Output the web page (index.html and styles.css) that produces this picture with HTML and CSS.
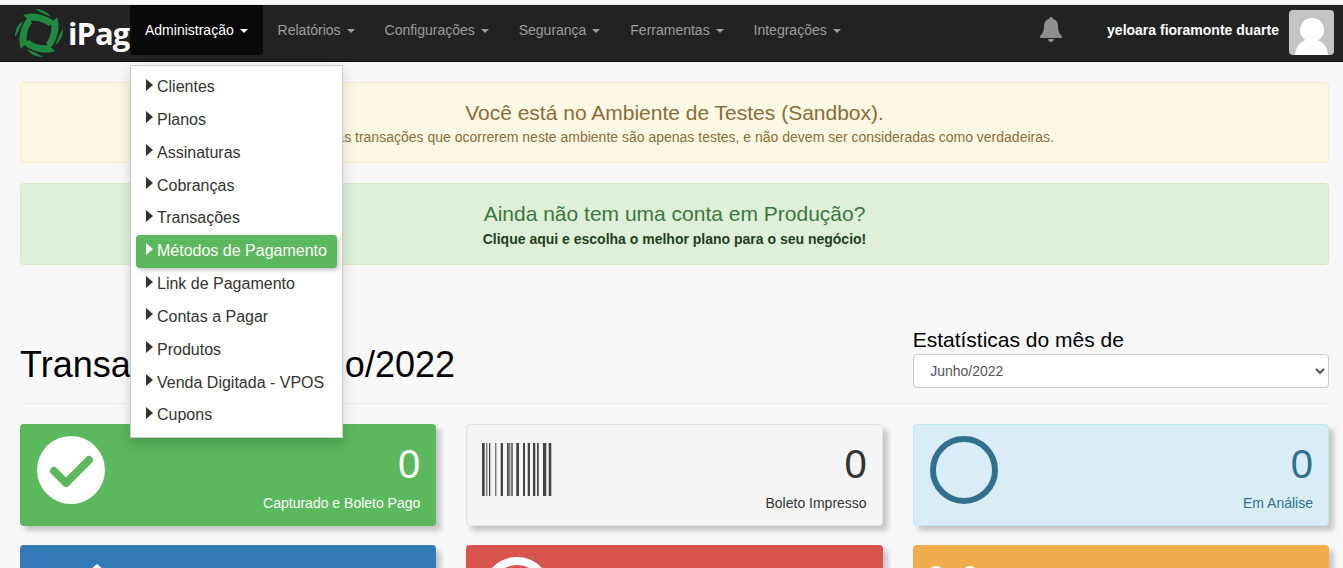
FILE: index.html
```html
<!DOCTYPE html>
<html lang="pt-BR">
<head>
<meta charset="utf-8">
<title>iPag</title>
<link rel="stylesheet" href="styles.css">
</head>
<body>
<header class="navbar">
  <a class="brand" href="#">
    <svg class="brand-mark" viewBox="-24 -25 48 50" aria-hidden="true">
      <g fill="#1f8a3f">
        <g id="blade"><path d="M-16,-18 C-6,-22 8,-18 16,-11 L10,-7 C4,-12 -4,-13 -9,-12 Z"/><path d="M-4,-24 C3,-24 9,-21 12,-16 C6,-19 0,-21 -4,-24 Z"/></g>
        <use href="#blade" transform="rotate(90)"/>
        <use href="#blade" transform="rotate(180)"/>
        <use href="#blade" transform="rotate(270)"/>
      </g>
    </svg>
    <span class="brand-name">iPag</span>
  </a>
  <nav class="nav">
    <a class="nav-item is-active" href="#">Administração <i class="caret"></i></a>
    <a class="nav-item" href="#">Relatórios <i class="caret"></i></a>
    <a class="nav-item" href="#">Configurações <i class="caret"></i></a>
    <a class="nav-item" href="#">Segurança <i class="caret"></i></a>
    <a class="nav-item" href="#">Ferramentas <i class="caret"></i></a>
    <a class="nav-item" href="#">Integrações <i class="caret"></i></a>
  </nav>
  <svg class="bell" viewBox="0 0 22 25" aria-hidden="true"><path d="M11 0c-1.1 0-1.8.8-1.7 1.8C5.8 2.6 4 5.3 4 9c0 5-1.2 7.400-3.300 9.300-.5.5-.7.9-.7 1.400 0 .7.500 1.300 1.300 1.300h19.400c.8 0 1.300-.6 1.300-1.300 0-.5-.2-.9-.7-1.400C19.200 16.400 18 14 18 9c0-3.700-1.800-6.400-5.300-7.200C12.800.8 12.100 0 11 0zM8 22c.2 1.700 1.500 3 3 3s2.800-1.300 3-3z"/></svg>
  <span class="user-name">yeloara fioramonte duarte</span>
  <svg class="avatar" viewBox="0 0 45 45" aria-hidden="true"><circle cx="23" cy="20" r="12"/><path d="M6 45C7 34 14 29 22.500 29S38 34 39 45z"/></svg>
</header>

<main class="page">
  <div class="alert alert-warning">
    <h4>Você está no Ambiente de Testes (Sandbox).</h4>
    <p>Todas as transações que ocorrerem neste ambiente são apenas testes, e não devem ser consideradas como verdadeiras.</p>
  </div>
  <div class="alert alert-success">
    <h4>Ainda não tem uma conta em Produção?</h4>
    <p><strong>Clique aqui e escolha o melhor plano para o seu negócio!</strong></p>
  </div>

  <section class="title-row">
    <h1>Transações de Junho/2022</h1>
    <div class="month-picker">
      <label for="mes">Estatísticas do mês de</label>
      <select id="mes"><option>Junho/2022</option></select>
    </div>
  </section>
  <hr class="rule">

  <section class="cards">
    <article class="card card-green">
      <svg class="card-icon" viewBox="0 0 68 68" aria-hidden="true"><circle class="ico-fill" cx="34" cy="34" r="34"/><path class="ico-check" d="M17 35L29 47L52 24"/></svg>
      <div class="card-body"><div class="card-num">0</div><div class="card-label">Capturado e Boleto Pago</div></div>
    </article>
    <article class="card card-gray">
      <svg class="barcode" viewBox="0 0 71 53" aria-hidden="true"><path d="M0 0h2.700v53H0zM4.300 0h1v53h-1zM7 0h1.300v53H7zM13.300 0h1v53h-1zM18.700 0h2.300v53h-2.300zM25 0h1.700v53H25zM27.300 0h1v53h-1zM29.300 0h1.400v53h-1.400zM34.300 0h2.700v53h-2.700zM41 0h2v53h-2zM45.700 0h2.300v53h-2.300zM51 0h2.300v53H51zM55 0h1.700v53H55zM61 0h3.300v53H61zM66.700 0h2.600v53h-2.600z"/></svg>
      <div class="card-body"><div class="card-num">0</div><div class="card-label">Boleto Impresso</div></div>
    </article>
    <article class="card card-info">
      <svg class="card-icon" viewBox="0 0 68 68" aria-hidden="true"><circle class="ico-ring" cx="34" cy="34" r="31"/></svg>
      <div class="card-body"><div class="card-num">0</div><div class="card-label">Em Análise</div></div>
    </article>
    <article class="card card-blue">
      <svg class="card-icon card-icon-low" viewBox="0 0 68 68" aria-hidden="true"><path class="ico-fill" d="M60 7l14 12v49H46V19z"/></svg>
      <div class="card-body"><div class="card-num">0</div><div class="card-label">Autorizado</div></div>
    </article>
    <article class="card card-red">
      <svg class="card-icon" viewBox="0 0 68 68" aria-hidden="true"><circle class="ico-ring-white" cx="34" cy="34" r="30"/></svg>
      <div class="card-body"><div class="card-num">0</div><div class="card-label">Cancelado</div></div>
    </article>
    <article class="card card-orange">
      <svg class="card-icon card-icon-low" viewBox="0 0 68 68" aria-hidden="true"><circle class="ico-fill" cx="6" cy="17" r="8"/><circle class="ico-fill" cx="40" cy="17" r="8"/></svg>
      <div class="card-body"><div class="card-num">0</div><div class="card-label">Pendente</div></div>
    </article>
  </section>
</main>

<ul class="dropdown">
  <li><a href="#"><i class="arrow"></i>Clientes</a></li>
  <li><a href="#"><i class="arrow"></i>Planos</a></li>
  <li><a href="#"><i class="arrow"></i>Assinaturas</a></li>
  <li><a href="#"><i class="arrow"></i>Cobranças</a></li>
  <li><a href="#"><i class="arrow"></i>Transações</a></li>
  <li><a class="is-active" href="#"><i class="arrow"></i>Métodos de Pagamento</a></li>
  <li><a href="#"><i class="arrow"></i>Link de Pagamento</a></li>
  <li><a href="#"><i class="arrow"></i>Contas a Pagar</a></li>
  <li><a href="#"><i class="arrow"></i>Produtos</a></li>
  <li><a href="#"><i class="arrow"></i>Venda Digitada - VPOS</a></li>
  <li><a href="#"><i class="arrow"></i>Cupons</a></li>
</ul>
</body>
</html>
```
FILE: styles.css
```css
* { box-sizing: border-box; }
html, body { height: 568px; overflow: hidden; }
body {
  margin: 0;
  padding-top: 4px;
  background: #f8f8f8;
  font: 14px/1.42857 "Liberation Sans", Arial, sans-serif;
  color: #333;
}
a { text-decoration: none; color: inherit; }

.navbar {
  display: flex;
  align-items: flex-start;
  height: 58px;
  background: #222;
  border-top: 1px solid #e7e7e7;
  border-bottom: 1px solid #080808;
}
.brand { display: flex; align-items: center; height: 56px; width: 130px; padding-left: 15px; flex: none; }
.brand-mark { width: 48px; height: 50px; flex: none; }
.brand-name { margin-left: 5px; font: 700 31px/1 "Open Sans", sans-serif; letter-spacing: -1px; color: #fff; }
.nav { display: flex; }
.nav-item { display: block; height: 50px; padding: 15px; line-height: 20px; color: #9d9d9d; white-space: nowrap; }
.nav-item.is-active { background: #080808; color: #fff; border-radius: 0 0 4px 4px; }
.caret {
  display: inline-block;
  margin-left: 2px;
  vertical-align: middle;
  border-top: 4px solid;
  border-left: 4px solid transparent;
  border-right: 4px solid transparent;
}
.bell { width: 22px; height: 25px; margin: 12px 45px 0 auto; fill: #8f8f8f; flex: none; }
.user-name { margin-top: 15px; line-height: 20px; font-weight: 700; color: #fff; white-space: nowrap; }
.avatar { width: 45px; height: 45px; margin: 5px 9px 0 10px; background: #c4c4c4; border-radius: 4px; fill: #fff; flex: none; }

.page { padding: 20px 14px 0 20px; }
.alert { padding: 15px; margin-bottom: 20px; border: 1px solid transparent; border-radius: 4px; text-align: center; }
.alert h4 { margin: 4px 0 0; font-size: 21px; font-weight: 400; line-height: 22px; }
.alert p { margin: 3px 0 0; line-height: 20px; }
.alert-warning { height: 81px; background: #fcf8e3; border-color: #faebcc; color: #8a6d3b; }
.alert-success { height: 82px; background: #dff0d8; border-color: #d6e9c6; color: #3c763d; }
.alert-success p { margin-top: 4px; color: #1f3f20; }

.title-row { display: grid; grid-template-columns: repeat(3, 1fr); column-gap: 30px; align-items: end; margin-top: 63px; }
.title-row h1 { grid-column: span 2; margin: 0 0 3px; font-size: 36px; font-weight: 400; line-height: 40px; color: #000; }
.month-picker { display: flex; flex-direction: column; }
.month-picker label { font-size: 21px; line-height: 24px; margin-bottom: 2px; color: #000; }
.month-picker select {
  height: 34px;
  padding: 6px 12.500px;
  font: inherit;
  color: #555;
  background: #fff;
  border: 1px solid #ccc;
  border-radius: 4px;
}
.rule { margin: 15px 0 20px; border: 0; border-top: 1px solid #eee; }

.cards { display: grid; grid-template-columns: repeat(3, 1fr); gap: 19px 30px; }
.card {
  display: flex;
  justify-content: space-between;
  height: 102px;
  padding: 12px 16px 12px 17px;
  border-radius: 4px;
  box-shadow: 5px 5px 5px rgba(0, 0, 0, .2);
}
.card-icon { width: 68px; height: 68px; flex: none; overflow: visible; }
.ico-fill { fill: #fff; }
.ico-check { fill: none; stroke: #5cb85c; stroke-width: 8; stroke-linejoin: round; stroke-linecap: round; }
.ico-ring { fill: none; stroke: #31708f; stroke-width: 6; }
.ico-ring-white { fill: none; stroke: #fff; stroke-width: 8; }
.barcode { width: 71px; height: 53px; margin: 7px 0 0 -1px; fill: #444; flex: none; }
.card-body { text-align: right; }
.card-num { font-size: 40px; line-height: 40px; margin-top: 8px; }
.card-label { margin-top: 9px; line-height: 20px; }
.card-green { background: #5cb85c; color: #fff; }
.card-gray { background: #f5f5f5; border: 1px solid #e3e3e3; color: #333; padding: 11px 15px 11px 16px; }
.card-info { background: #d9edf7; border: 1px solid #bce8f1; color: #31708f; padding: 11px 15px 11px 16px; }
.card-blue { background: #337ab7; color: #fff; }
.card-red { background: #d9534f; color: #fff; }
.card-orange { background: #f0ad4e; color: #fff; }

.dropdown {
  position: absolute;
  left: 130px;
  top: 65px;
  width: 213px;
  margin: 0;
  padding: 5px;
  list-style: none;
  background: #fff;
  border: 1px solid #ccc;
  box-shadow: 0 6px 12px rgba(0, 0, 0, .175);
  font-size: 16px;
}
.dropdown a { display: block; padding: 5px 10px; border-radius: 4px; color: #333; }
.dropdown a.is-active { background: #5cb85c; color: #fff; box-shadow: 2px 2px 4px rgba(0, 0, 0, .25); }
.arrow {
  display: inline-block;
  margin-right: 4px;
  vertical-align: 1.500px;
  border-left: 7px solid;
  border-top: 6px solid transparent;
  border-bottom: 6px solid transparent;
}
```
